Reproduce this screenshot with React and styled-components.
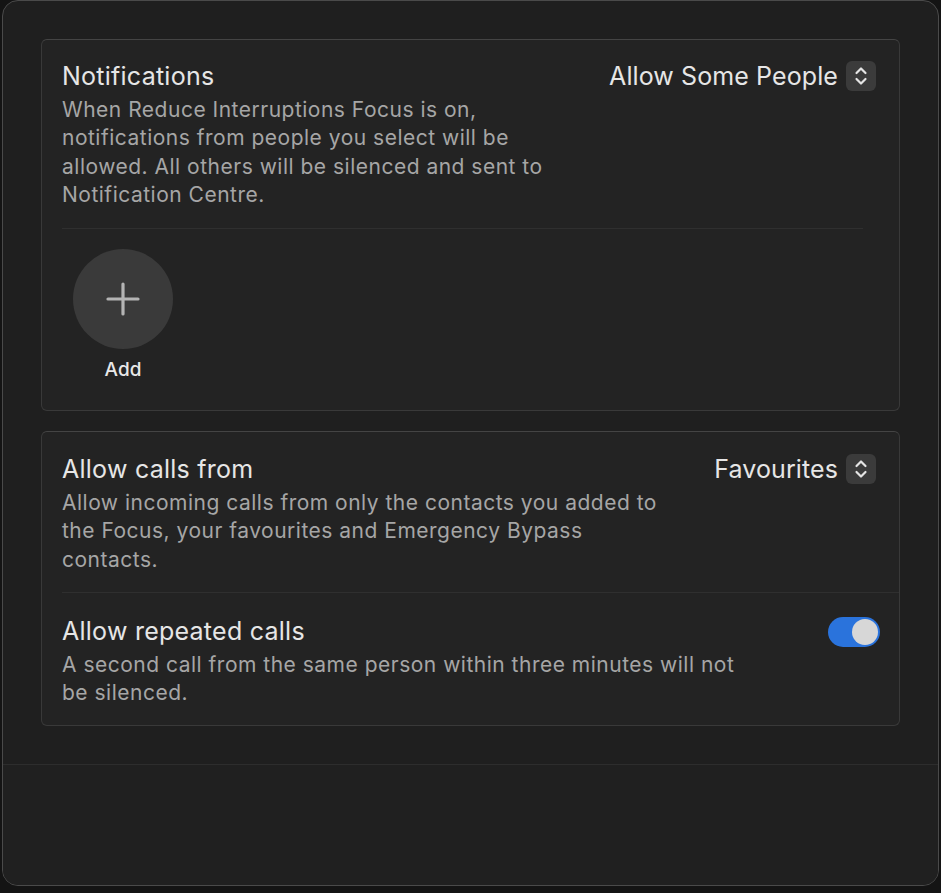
import styled, { createGlobalStyle } from "styled-components";

const Global = createGlobalStyle`
  html, body {
    margin: 0;
    padding: 0;
    background: #141414;
  }
  body {
    font-family: Inter, "Noto Sans", "Liberation Sans", sans-serif;
    -webkit-font-smoothing: antialiased;
  }
`;

const Window = styled.div`
  margin: 0 2px;
  height: 886px;
  box-sizing: border-box;
  display: flex;
  flex-direction: column;
  background: #1f1f1f;
  border: 1px solid #4a4a4a;
  border-radius: 16px;
  overflow: hidden;
`;

const Content = styled.div`
  flex: 1;
  display: flex;
  flex-direction: column;
  gap: 20px;
  padding: 38px 38px 0 38px;
`;

const Footer = styled.div`
  height: 120px;
  border-top: 1px solid #2d2d2d;
  background: #202020;
`;

const Card = styled.section`
  background: #232323;
  border: 1px solid #393939;
  border-top-color: #444;
  border-radius: 6px;
  display: flex;
  flex-direction: column;
`;

const Row = styled.div`
  display: flex;
  justify-content: space-between;
  align-items: flex-start;
  gap: 20px;
  padding: ${(p) => p.$pad || "20px"};
`;

const Text = styled.div`
  display: flex;
  flex-direction: column;
  gap: 4px;
`;

const Title = styled.div`
  font-size: 25px;
  line-height: 32px;
  color: #e6e6e6;
  letter-spacing: 0.25px;
`;

const Desc = styled.div`
  font-size: 21px;
  line-height: 28.3px;
  color: #a6a6a6;
  letter-spacing: 0.5px;
`;

const Select = styled.div`
  display: flex;
  align-items: center;
  gap: 8px;
  font-size: 25px;
  line-height: 32px;
  color: #e6e6e6;
  white-space: nowrap;
  letter-spacing: 0.1px;
`;

const Stepper = styled.span`
  width: 30px;
  height: 30px;
  border-radius: 6px;
  background: #3b3b3b;
  display: flex;
  align-items: center;
  justify-content: center;
`;

const Divider = styled.div`
  height: 1px;
  background: #2f2f2f;
  margin: ${(p) => (p.$inset ? "0 0 0 20px" : "0 36px 0 20px")};
`;

const People = styled.div`
  display: flex;
  padding: 20px 31px 28px;
`;

const Person = styled.div`
  display: flex;
  flex-direction: column;
  align-items: center;
  gap: 9px;
`;

const AddCircle = styled.div`
  width: 100px;
  height: 100px;
  border-radius: 50%;
  background: #3a3a3a;
  display: flex;
  align-items: center;
  justify-content: center;
`;

const Label = styled.div`
  font-size: 19px;
  line-height: 24px;
  font-weight: 500;
  color: #e8e8e8;
`;

const Toggle = styled.div`
  flex: none;
  width: 52px;
  height: 30px;
  border-radius: 15px;
  background: ${(p) => (p.$on ? "#2a73dc" : "#444")};
  display: flex;
  align-items: center;
  justify-content: ${(p) => (p.$on ? "flex-end" : "flex-start")};
  padding: 0 2px;
  box-sizing: border-box;
  margin-top: 2px;
`;

const Knob = styled.div`
  width: 26px;
  height: 26px;
  border-radius: 50%;
  background: #d7d7d7;
`;

const Chevrons = () => (
  <Stepper>
    <svg width="14" height="22" viewBox="0 0 14 22" fill="none" stroke="#e4e4e4" strokeWidth="2.2" strokeLinecap="round" strokeLinejoin="round">
      <path d="M2.5 8 L7 3.5 L11.5 8" />
      <path d="M2.5 14 L7 18.5 L11.5 14" />
    </svg>
  </Stepper>
);

export default function App() {
  return (
    <>
      <Global />
      <Window>
        <Content>
          <Card>
            <Row $pad="20px 23px 19px 20px">
              <Text>
                <Title>Notifications</Title>
                <Desc>
                  When Reduce Interruptions Focus is on,
                  <br />
                  notifications from people you select will be
                  <br />
                  allowed. All others will be silenced and sent to
                  <br />
                  Notification Centre.
                </Desc>
              </Text>
              <Select>
                Allow Some People
                <Chevrons />
              </Select>
            </Row>
            <Divider />
            <People>
              <Person>
                <AddCircle>
                  <svg width="34" height="34" viewBox="0 0 34 34" stroke="#b4b4b4" strokeWidth="3.2" strokeLinecap="round">
                    <path d="M17 2 V32" />
                    <path d="M2 17 H32" />
                  </svg>
                </AddCircle>
                <Label>Add</Label>
              </Person>
            </People>
          </Card>
          <Card>
            <Row $pad="21px 23px 18px 20px">
              <Text>
                <Title>Allow calls from</Title>
                <Desc>
                  Allow incoming calls from only the contacts you added to
                  <br />
                  the Focus, your favourites and Emergency Bypass
                  <br />
                  contacts.
                </Desc>
              </Text>
              <Select>
                Favourites
                <Chevrons />
              </Select>
            </Row>
            <Divider $inset />
            <Row $pad="22px 19px 17px 20px">
              <Text>
                <Title>Allow repeated calls</Title>
                <Desc>
                  A second call from the same person within three minutes will not
                  <br />
                  be silenced.
                </Desc>
              </Text>
              <Toggle $on>
                <Knob />
              </Toggle>
            </Row>
          </Card>
        </Content>
        <Footer />
      </Window>
    </>
  );
}
